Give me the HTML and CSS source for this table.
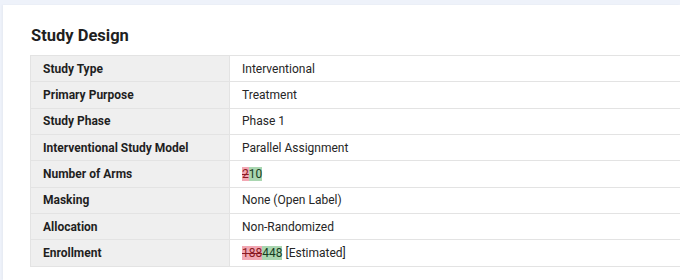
FILE: index.html
```html
<!DOCTYPE html>
<html>
<head>
<meta charset="utf-8">
<link rel="stylesheet" href="styles.css">
</head>
<body>
<div class="card">
  <h2 class="title">Study Design</h2>
  <table class="design">
    <tr><th>Study Type</th><td>Interventional</td></tr>
    <tr><th>Primary Purpose</th><td>Treatment</td></tr>
    <tr><th>Study Phase</th><td>Phase 1</td></tr>
    <tr><th>Interventional Study Model</th><td>Parallel Assignment</td></tr>
    <tr><th>Number of Arms</th><td><del class="del">2</del><ins class="ins">10</ins></td></tr>
    <tr><th>Masking</th><td>None (Open Label)</td></tr>
    <tr><th>Allocation</th><td>Non-Randomized</td></tr>
    <tr><th>Enrollment</th><td><del class="del">188</del><ins class="ins">448</ins> [Estimated]</td></tr>
  </table>
</div>
</body>
</html>
```
FILE: styles.css
```css
html, body {
  margin: 0;
  padding: 0;
  height: 280px;
  overflow: hidden;
  background: #eef2fa;
  font-family: Roboto, "Liberation Sans", sans-serif;
  color: #202124;
}
.card {
  margin: 5px 0 0 3px;
  height: 275px;
  background: #fff;
  padding: 21px 0 0 27px;
  box-sizing: border-box;
  box-shadow: -1px 0 2px rgba(0,0,0,0.04);
}
.title {
  margin: 0 0 9px 1px;
  font-size: 16.5px;
  line-height: 20px;
  font-weight: 700;
  color: #1f1f1f;
}
.design {
  border-collapse: collapse;
  width: 100%;
  font-size: 12px;
}
.design tr {
  height: 26.33px;
}
.design th, .design td {
  border: 1.5px solid #e3e3e3;
  padding: 0 12px;
  text-align: left;
  vertical-align: middle;
  line-height: 16px;
}
.design th {
  width: 174px;
  background: #efefef;
  font-weight: 700;
  color: #1f1f1f;
}
.design td {
  border-right: none;
  color: #262626;
}
.del {
  background: #f2a7b3;
  color: #8b1a24;
  text-decoration: line-through;
}
.ins {
  background: #a9d6b0;
  color: #173d1f;
  text-decoration: none;
}
```
